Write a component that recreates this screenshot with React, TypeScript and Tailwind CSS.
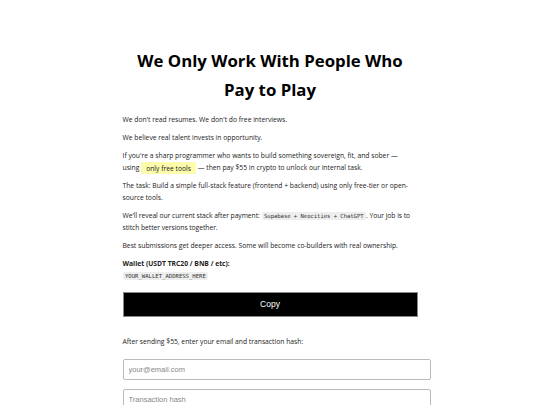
export default function App() {
  const code = "font-['DejaVu_Sans_Mono',monospace] text-[5.6px] bg-[#eeeeee] px-[2.5px] py-[1px] rounded-[2px] text-[#333]";
  return (
    <div className="min-h-[405px] bg-white font-['Open_Sans',sans-serif] text-[#222]">
      <div className="w-[295px] mx-auto pt-[46px]">
        <h1 className="text-[16.8px] font-bold text-center leading-[29px] text-black mb-[10px]">
          We Only Work With People Who Pay to Play
        </h1>
        <div className="text-[6.75px] leading-[12px] flex flex-col gap-[6px]">
          <p>We don't read resumes. We don't do free interviews.</p>
          <p>We believe real talent invests in opportunity.</p>
          <p>
            If you're a sharp programmer who wants to build something sovereign, fit, and sober — using{"\u00a0"}
            <span className="bg-[#fdfcab] px-[5px] py-[1.5px]">only free tools</span> — then pay $55 in crypto to unlock our internal task.
          </p>
          <p>The task: Build a simple full-stack feature (frontend + backend) using only free-tier or open-source tools.</p>
          <p className="tracking-[-0.05px]">
            We'll reveal our current stack after payment: <span className={code}>Supabase + Neocities + ChatGPT</span>. Your job is to stitch better versions together.
          </p>
          <p>Best submissions get deeper access. Some will become co-builders with real ownership.</p>
          <div>
            <p className="font-bold">Wallet (USDT TRC20 / BNB / etc):</p>
            <span className={code}>YOUR_WALLET_ADDRESS_HERE</span>
          </div>
        </div>
        <button className="mt-[10px] w-full h-[25px] bg-black text-white border border-[#888] text-[8.5px] font-['Liberation_Sans',sans-serif]">
          Copy
        </button>
        <p className="text-[6.75px] mt-[20px]">After sending $55, enter your email and transaction hash:</p>
        <div className="flex flex-col gap-[9px] mt-[12px] w-[308px]">
          <input className="w-full h-[21px] border border-[#bbb] rounded-[2px] px-[5px] text-[7.5px] font-['Liberation_Sans',sans-serif] placeholder:text-[#888]" placeholder="your@email.com" />
          <input className="w-full h-[21px] border border-[#bbb] rounded-[2px] px-[5px] text-[7.5px] font-['Liberation_Sans',sans-serif] placeholder:text-[#888]" placeholder="Transaction hash" />
        </div>
      </div>
    </div>
  );
}
